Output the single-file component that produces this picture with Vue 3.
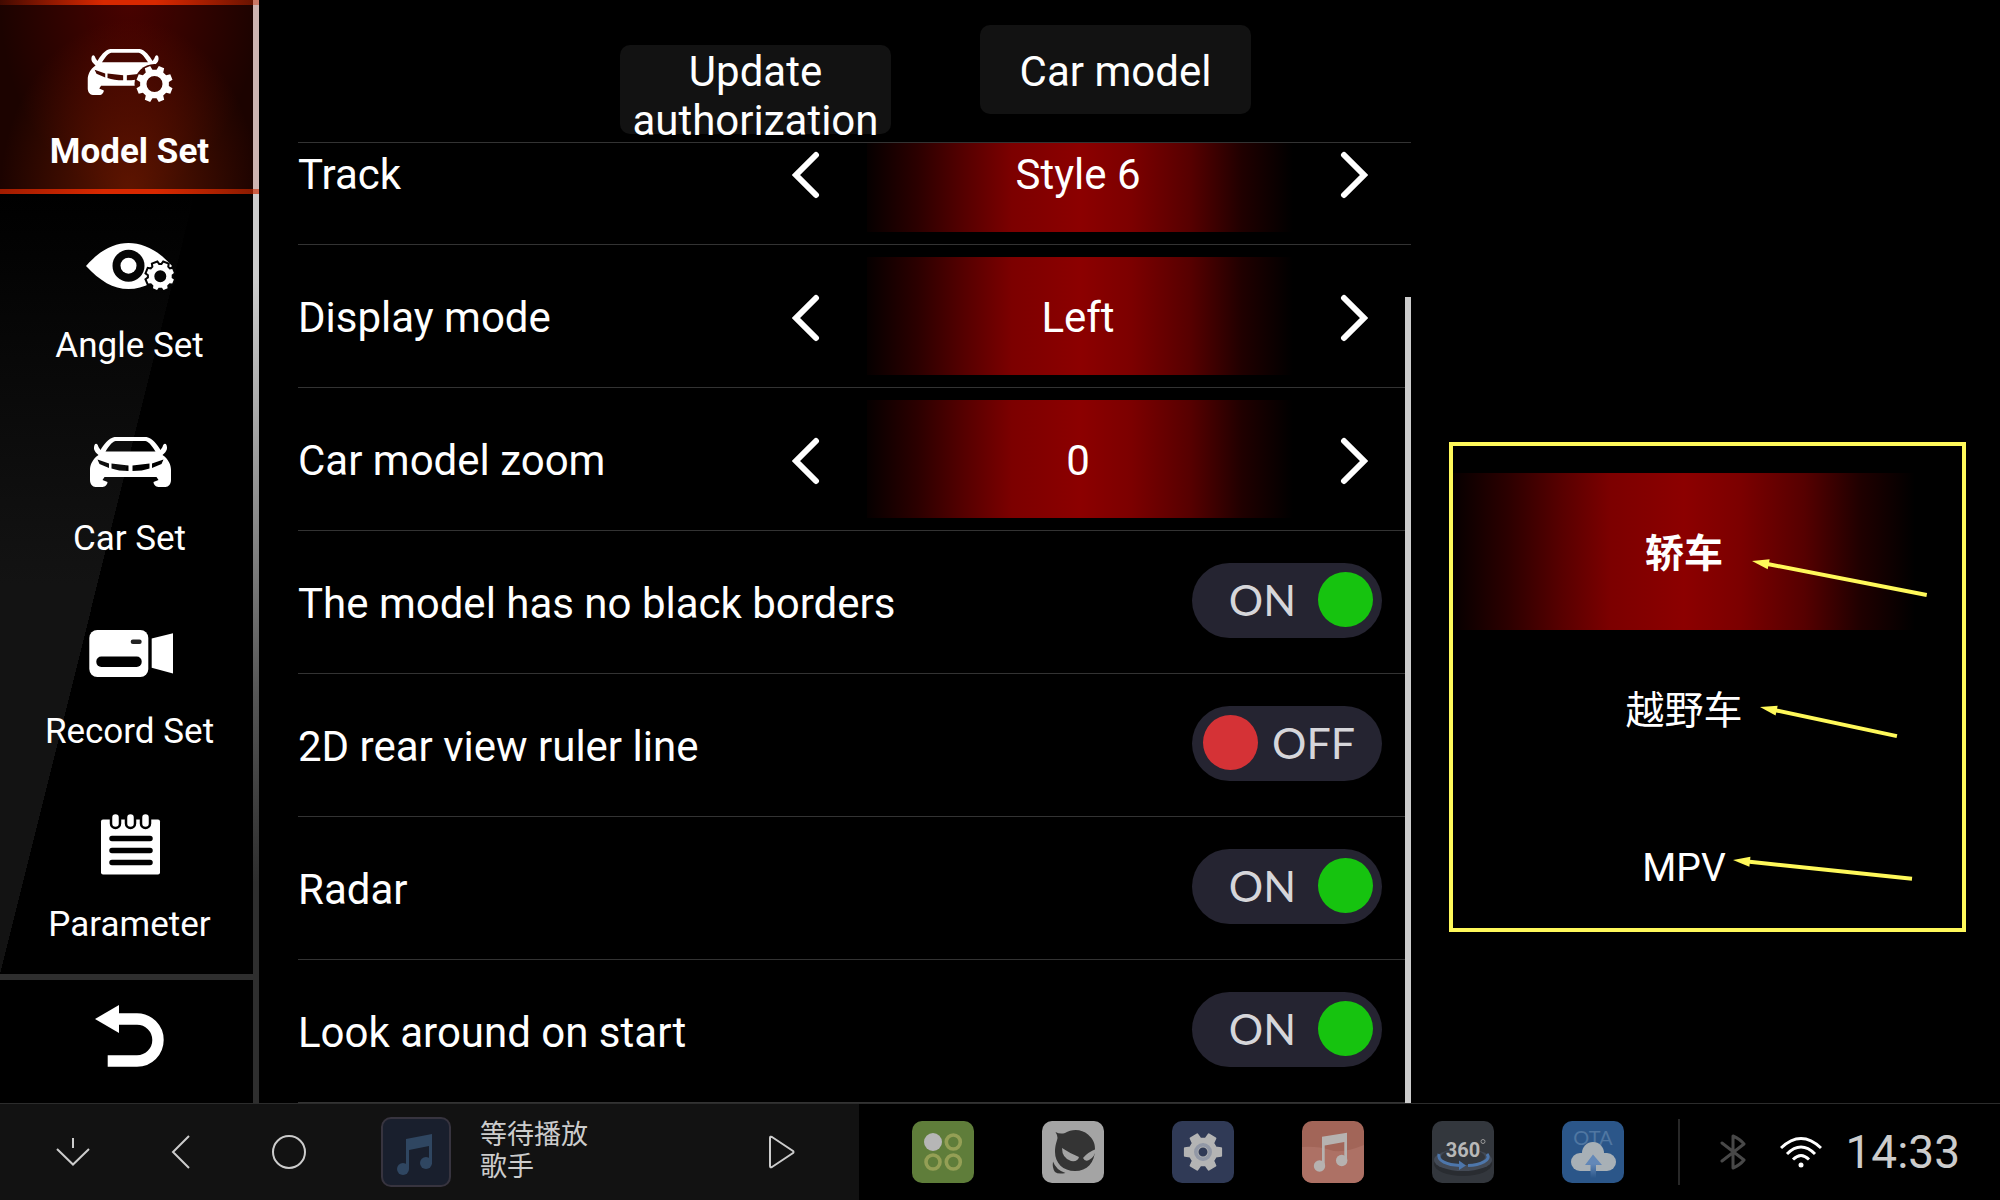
<template>
  <div class="screen">
    <div class="workspace">
      <aside class="sidebar">
        <nav class="nav">
          <button
            v-for="item in menu"
            :key="item.id"
            type="button"
            class="nav-item"
            :class="{ active: item.id === activeMenu }"
            @click="activeMenu = item.id"
          >
            <svg class="nav-icon" viewBox="0 0 96 72" aria-hidden="true">
              <template v-if="item.id === 'model'">
                <mask id="car-cut">
                  <rect width="96" height="72" fill="#fff" />
                  <circle cx="72.5" cy="48" r="20" fill="#000" />
                </mask>
                <g mask="url(#car-cut)">
                  <path :d="carPath" transform="translate(43 13) scale(.92)" fill-rule="evenodd" />
                </g>
                <path :d="gearPath(72.5, 48, 18.5, 14.5, 8, 8, 22.5)" fill-rule="evenodd" />
              </template>
              <template v-else-if="item.id === 'angle'">
                <path d="M4 36C18 20 32 13 46.500 13S76 20 90 36C76 51 62 59 46.500 59S18 51 4 36Z" />
                <circle cx="46.500" cy="35.700" r="16" fill="#050505" />
                <circle cx="46.500" cy="35.700" r="8" />
                <path :d="gearPath(78.3, 46.3, 14, 11.5, 0, 8, 22.5)" fill="#050505" stroke="#050505" stroke-width="4" />
                <path :d="gearPath(78.3, 46.3, 14, 11.5, 6, 8, 22.5)" fill-rule="evenodd" />
              </template>
              <path v-else-if="item.id === 'car'" :d="carPath" transform="translate(48.5 14)" fill-rule="evenodd" />
              <template v-else-if="item.id === 'record'">
                <rect x="7.300" y="14" width="59" height="47" rx="8" />
                <rect x="14.300" y="40.500" width="45.400" height="10.400" rx="5" fill="#000" />
                <rect x="48.700" y="23.500" width="11" height="4.500" rx="2.200" fill="#222" />
                <path d="M69.700 22.500L91 17.300V57.500L69.700 51.700Z" />
              </template>
              <template v-else>
                <rect x="19" y="10.500" width="59" height="55" rx="2" />
                <rect
                  v-for="x in [33.5, 48.5, 63.5]"
                  :key="x"
                  :x="x - 4.5"
                  y="4"
                  width="9"
                  height="15"
                  rx="4.500"
                  stroke="#000"
                  stroke-width="2.500"
                />
                <path d="M30 29.500H68M30 41.500H68M30 53.500H68" stroke="#000" stroke-width="5.500" stroke-linecap="round" />
              </template>
            </svg>
            <span>{{ item.label }}</span>
          </button>
        </nav>
        <button type="button" class="back" aria-label="Back">
          <svg width="72" height="64" viewBox="0 0 72 64">
            <path d="M24 15H43A21 21 0 0 1 43 57H13.700" fill="none" stroke="#fff" stroke-width="11.400" />
            <path d="M1 15L25 1V29Z" fill="#fff" />
          </svg>
        </button>
      </aside>

      <main class="main">
        <header class="header">
          <button type="button" class="head-btn tall">Update authorization</button>
          <button type="button" class="head-btn">Car model</button>
        </header>

        <div class="list">
          <div class="rows">
            <div v-for="row in steppers" :key="row.label" class="row">
              <span class="row-label">{{ row.label }}</span>
              <div class="stepper">
                <button type="button" class="arrow" :aria-label="'Previous ' + row.label">
                  <svg width="28" height="48" viewBox="0 0 28 48"><path d="M24 4L4 24L24 44" /></svg>
                </button>
                <span class="value">{{ row.value }}</span>
                <button type="button" class="arrow" :aria-label="'Next ' + row.label">
                  <svg width="28" height="48" viewBox="0 0 28 48"><path d="M4 4L24 24L4 44" /></svg>
                </button>
              </div>
            </div>
            <div v-for="row in switches" :key="row.id" class="row">
              <label class="row-label" :for="row.id">{{ row.label }}</label>
              <label class="toggle" :class="{ on: row.on }">
                <input :id="row.id" v-model="row.on" type="checkbox" />
                <span>{{ row.on ? 'ON' : 'OFF' }}</span>
              </label>
            </div>
          </div>
          <div class="scrollbar"></div>
        </div>
      </main>

      <section class="side">
        <div class="types">
          <button
            v-for="type in types"
            :key="type"
            type="button"
            class="type"
            :class="{ selected: type === selectedType }"
            @click="selectedType = type"
          >
            {{ type }}
          </button>
          <svg class="pointers" viewBox="0 0 509 482" aria-hidden="true">
            <g v-for="p in pointers" :key="p.y" :transform="`translate(${p.x} ${p.y}) rotate(${p.angle})`">
              <path :d="`M12 0H${p.length}`" stroke="#fff95a" stroke-width="4" />
              <path d="M0 0L17 -5V5Z" fill="#fff95a" />
            </g>
          </svg>
        </div>
      </section>
    </div>

    <footer class="taskbar">
      <div class="player">
        <button type="button" class="key" aria-label="Hide">
          <svg width="34" height="34" viewBox="0 0 34 34"><path d="M1 14L17 29.500L33 14M17 3V13" /></svg>
        </button>
        <button type="button" class="key" aria-label="Back">
          <svg width="34" height="34" viewBox="0 0 34 34"><path d="M26 1L10 17L26 33" /></svg>
        </button>
        <button type="button" class="key" aria-label="Home">
          <svg width="38" height="36" viewBox="0 0 38 36"><circle cx="19" cy="18" r="16" /></svg>
        </button>
        <div class="cover">
          <svg width="66" height="66" viewBox="0 0 66 66">
            <path d="M23 20L49 15V45H46V27L26 31V50H23Z" />
            <ellipse cx="20" cy="50" rx="6" ry="6" />
            <ellipse cx="43" cy="44" rx="6" ry="6" />
          </svg>
        </div>
        <div class="track">
          <span>等待播放</span>
          <span>歌手</span>
        </div>
        <button type="button" class="key play" aria-label="Play">
          <svg width="28" height="34" viewBox="0 0 28 34"><path d="M2 3V31Q2 33 4 32L25 18Q26 17 25 16L4 2Q2 1 2 3Z" /></svg>
        </button>
      </div>

      <div class="apps">
        <button type="button" class="app green" aria-label="Apps">
          <svg viewBox="0 0 62 62">
            <circle cx="21" cy="21" r="9" fill="#b6b6b6" />
            <g fill="none" stroke="#949f55" stroke-width="3.600">
              <circle cx="41.300" cy="21" r="7" />
              <circle cx="21" cy="41" r="7" />
              <circle cx="41.300" cy="41" r="7" />
            </g>
          </svg>
        </button>
        <button type="button" class="app gray" aria-label="Browser">
          <svg viewBox="0 0 62 62" fill="#343434">
            <path d="M13.500 11Q18 13.500 23 12C30 7.500 40 8 46 13.500C51 18 53 22 53 28C53 42 45 50 33 50C21 50 13 42 13 31C13 24 15 20 15.500 17Q15 13 13.500 11Z" />
            <path d="M20 27Q29 33 37 36Q36 41 29 40Q20 37 20 27ZM54 28Q46 31 41 37Q43 41 47 39Q53 36 54 28Z" fill="#a4a4a4" />
            <path d="M11 40.500Q14 49 23.500 52Q16 53.500 13 51Q10 47 11 40.500Z" />
          </svg>
        </button>
        <button type="button" class="app navy" aria-label="Settings">
          <svg viewBox="0 0 62 62">
            <path :d="gearPath(31, 31, 18.5, 13.5, 5.5, 6, 0)" fill="#b4b4b4" fill-rule="evenodd" stroke="#b4b4b4" stroke-width="2" stroke-linejoin="round" />
            <circle cx="31" cy="31" r="7.200" fill="none" stroke="#9298a6" stroke-width="3.600" />
          </svg>
        </button>
        <button type="button" class="app coral" aria-label="Music">
          <svg viewBox="0 0 62 62">
            <path d="M0 26Q16 25 28 29T62 24V62H0Z" fill="#ad7165" />
            <path d="M20 15.700L45 11.700V40H42.300V21L22.700 24.500V45H20Z" fill="#b6b2b0" />
            <circle cx="17.500" cy="45" r="5.700" fill="#b6b2b0" />
            <circle cx="39.700" cy="39.500" r="5.700" fill="#b6b2b0" />
          </svg>
        </button>
        <button type="button" class="app slate" aria-label="Around view">
          <svg viewBox="0 0 62 62">
            <ellipse cx="31" cy="43" rx="29" ry="12" fill="#292c31" />
            <ellipse cx="31" cy="39" rx="29" ry="11" fill="#434a56" />
            <ellipse cx="31" cy="36" rx="22" ry="8" fill="#33373d" />
            <path d="M7 33C5 40 15 44 28 44.500M55 33C60 39 48 44 36 44.500" fill="none" stroke="#4d76ab" stroke-width="3" />
            <path d="M27 39.500L34 44.500L27 49Z" fill="#4d76ab" />
            <text x="31" y="36" text-anchor="middle" class="around">360</text>
            <circle cx="51" cy="20.500" r="2" fill="none" stroke="#999" />
          </svg>
        </button>
        <button type="button" class="app blue" aria-label="OTA update">
          <svg viewBox="0 0 62 62">
            <defs>
              <linearGradient id="stem" x1="0" y1="0" x2="0" y2="1">
                <stop offset=".4" stop-color="#6388b8" />
                <stop offset="1" stop-color="#2b5689" />
              </linearGradient>
            </defs>
            <text x="31" y="24" text-anchor="middle" class="ota">OTA</text>
            <g fill="#a8b0b6">
              <circle cx="31" cy="32" r="11" />
              <rect x="9" y="32" width="45" height="18" rx="9" />
            </g>
            <path d="M31 33.500L40 44H34V57H28.500V44H23Z" fill="url(#stem)" />
          </svg>
        </button>
      </div>

      <div class="status">
        <svg class="bluetooth" width="26" height="36" viewBox="0 0 26 36">
          <path d="M2 9L24 26Q20 31 13 34V2Q20 5 24 10L2 27" />
        </svg>
        <svg class="wifi" width="42" height="32" viewBox="0 0 42 32">
          <path d="M1 12Q21 -7 41 12M7 18Q21 4 35 18M13 23.500Q21 15.500 29 23.500" />
          <circle cx="21" cy="29" r="2.500" />
        </svg>
        <time>14:33</time>
      </div>
    </footer>
  </div>
</template>

<script setup>
import { ref } from 'vue'

const menu = [
  { id: 'model', label: 'Model Set' },
  { id: 'angle', label: 'Angle Set' },
  { id: 'car', label: 'Car Set' },
  { id: 'record', label: 'Record Set' },
  { id: 'parameter', label: 'Parameter' },
]
const activeMenu = ref('model')

const steppers = ref([
  { label: 'Track', value: 'Style 6' },
  { label: 'Display mode', value: 'Left' },
  { label: 'Car model zoom', value: '0' },
])

const switches = ref([
  { id: 'borders', label: 'The model has no black borders', on: true },
  { id: 'ruler', label: '2D rear view ruler line', on: false },
  { id: 'radar', label: 'Radar', on: true },
  { id: 'look', label: 'Look around on start', on: true },
])

const types = ['轿车', '越野车', 'MPV']
const selectedType = ref('轿车')

const pointers = [
  { x: 299, y: 115, angle: 11, length: 178 },
  { x: 307, y: 261, angle: 12, length: 140 },
  { x: 280, y: 414, angle: 6, length: 180 },
]

// front view of a car, centred on x = 0
const carPath = [
  'M-16 0H16C22 1 27 8 30 13L32 10C33 6 35 6 36 8C37 11 37 14 32 18',
  'C38 22 40.500 28 40.500 33V43C40.500 47 38 50 35 50H28C25 50 23 47 23 45L28 43L26 40',
  'H-26L-28 43L-23 45C-23 47 -25 50 -28 50H-35C-38 50 -40.500 47 -40.500 43V33',
  'C-40.500 28 -38 22 -32 18C-37 14 -37 11 -36 8C-35 6 -33 6 -32 10L-30 13C-27 8 -22 1 -16 0Z',
  'M-15 4C-19 5 -22 10 -25 14.500H25C22 10 19 5 15 4Z',
  'M-33 22.500L-21.500 26.500V31L-31 27Z',
  'M33 22.500L21.500 26.500V31L31 27Z',
  'M-19 26.500L-2 28.500V34Q-12 34 -19 31.500Z',
  'M19 26.500L2 28.500V34Q12 34 19 31.500Z',
].join('')

function gearPath(cx, cy, outer, inner, hole, teeth, offset) {
  const step = 360 / teeth
  const point = (r, deg) => {
    const a = (deg * Math.PI) / 180
    return `${(cx + r * Math.cos(a)).toFixed(2)} ${(cy + r * Math.sin(a)).toFixed(2)}`
  }
  const points = []
  for (let i = 0; i < teeth; i++) {
    const a = offset + i * step
    points.push(point(inner, a - step * 0.32), point(outer, a - step * 0.2))
    points.push(point(outer, a + step * 0.2), point(inner, a + step * 0.32))
  }
  let d = 'M' + points.join('L') + 'Z'
  if (hole) {
    d += `M${cx - hole} ${cy}a${hole} ${hole} 0 1 0 ${hole * 2} 0a${hole} ${hole} 0 1 0 ${-hole * 2} 0Z`
  }
  return d
}
</script>

<style>
body {
  margin: 0;
  background: #000;
}
</style>

<style scoped>
.screen {
  display: flex;
  flex-direction: column;
  height: 100vh;
  overflow: hidden;
  background: #000;
  color: #fff;
  font-family: Roboto, 'Noto Sans CJK SC', sans-serif;
}

button {
  padding: 0;
  border: 0;
  background: none;
  color: inherit;
  font: inherit;
}

svg {
  display: block;
}

.workspace {
  flex: 1;
  min-height: 0;
  display: grid;
  grid-template-columns: 259px minmax(0, 1152fr) minmax(0, 589fr);
  grid-template-rows: minmax(0, 1fr);
}

/* sidebar */
.sidebar {
  display: flex;
  flex-direction: column;
  background: linear-gradient(#ccc, #ccc 25%, #aaa 37%, #555 63%, #2e2e2e 80%) right / 6px 100% no-repeat;
}

.nav {
  flex: 1;
  background:
    linear-gradient(104deg, transparent 49%, #000 49%) left / 253px 100% no-repeat,
    linear-gradient(#000 20%, #131313 60%) left / 253px 100% no-repeat;
}

.nav-item {
  display: flex;
  flex-direction: column;
  align-items: center;
  width: 100%;
  height: 193px;
  padding-top: 36px;
  box-sizing: border-box;
  font-size: 35px;
  line-height: 40px;
}

.nav-item.active {
  height: 194px;
  font-weight: 700;
  background:
    linear-gradient(90deg, rgba(120, 20, 0, 0.4), #d82800 40%, #d82800 60%, rgba(200, 40, 0, 0.4)) top / 100% 5px no-repeat,
    linear-gradient(90deg, #a01c00, #d82800 40%, #d82800 60%, rgba(200, 40, 0, 0.6)) bottom / 100% 5px no-repeat,
    radial-gradient(ellipse 50% 90% at 50% 100%, rgba(200, 50, 0, 0.38), transparent),
    radial-gradient(ellipse 50% 100% at 50% 0%, rgba(200, 0, 0, 0.26), transparent),
    rgba(220, 20, 0, 0.13);
}

.nav-icon {
  width: 96px;
  height: 72px;
  margin-bottom: 24px;
  fill: #fff;
}

.back {
  display: flex;
  align-items: center;
  justify-content: center;
  height: 129px;
  padding-bottom: 12px;
  box-sizing: border-box;
  border-top: 6px solid #2e2e2e;
}

/* settings */
.main {
  display: flex;
  flex-direction: column;
  padding-left: 39px;
  font-size: 42px;
  line-height: 49px;
}

.header {
  display: flex;
  align-items: baseline;
  gap: 89px;
  height: 142px;
  padding: 25px 0 0 322px;
  box-sizing: border-box;
}

.head-btn {
  display: flex;
  align-items: center;
  justify-content: center;
  width: 271px;
  height: 89px;
  padding-top: 4px;
  box-sizing: border-box;
  border-radius: 10px;
  background: #121212;
}

.head-btn.tall {
  align-items: flex-start;
  padding-top: 2px;
}

.list {
  flex: 1;
  min-height: 0;
  position: relative;
  display: flex;
  flex-direction: column;
  justify-content: flex-end;
  overflow: hidden;
  border-top: 1px solid #333;
}

.row {
  display: flex;
  align-items: center;
  height: 143px;
  padding-right: 29px;
  box-sizing: border-box;
  border-bottom: 1px solid #333;
}

.row-label {
  flex: 1;
  padding-top: 2px;
}

.stepper {
  display: flex;
  align-items: center;
  gap: 47px;
  margin-right: 14px;
}

.arrow {
  padding-top: 4px;
}

.arrow path {
  fill: none;
  stroke: #fff;
  stroke-width: 6;
  stroke-linecap: round;
}

.value {
  width: 426px;
  height: 118px;
  padding: 4px 4px 0 0;
  box-sizing: border-box;
  line-height: 114px;
  text-align: center;
  background: linear-gradient(90deg, #060000, #2c0000 12%, #560000 23%, #7c0000 34%, #8c0000 50%, #7c0000 62%, #560000 76%, #200000 88%, #000);
}

.toggle {
  display: flex;
  align-items: center;
  gap: 14px;
  width: 190px;
  height: 75px;
  margin-bottom: 3px;
  padding: 0 9px 2px 11px;
  box-sizing: border-box;
  border-radius: 38px;
  background: #252431;
  color: #d6d6da;
  font-family: Lato, sans-serif;
  font-size: 43px;
}

.toggle.on {
  flex-direction: row-reverse;
  gap: 22px;
}

.toggle input {
  appearance: none;
  width: 55px;
  height: 55px;
  margin: 0;
  border-radius: 50%;
  background: #d53236;
}

.toggle.on input {
  background: #16c30f;
}

.scrollbar {
  position: absolute;
  top: 154px;
  right: 0;
  bottom: 0;
  width: 6px;
  background: #ccc;
}

/* vehicle types */
.side {
  padding: 442px 34px 0 38px;
}

.types {
  position: relative;
  padding: 27px 47px 0 0;
  height: 490px;
  box-sizing: border-box;
  border: 4px solid #fff95a;
}

.type {
  display: block;
  width: 100%;
  height: 157px;
  padding-top: 4px;
  font-size: 39px;
  line-height: 46px;
}

.type.selected {
  font-weight: 700;
  background: linear-gradient(90deg, #060000, #2c0000 12%, #560000 23%, #7c0000 34%, #8c0000 50%, #7c0000 62%, #560000 76%, #200000 88%, #000);
}

.pointers {
  position: absolute;
  inset: 0;
  width: 100%;
  height: 100%;
  pointer-events: none;
}

/* taskbar */
.taskbar {
  display: flex;
  align-items: center;
  height: 97px;
  box-sizing: border-box;
  border-top: 1px solid #2c2c2c;
}

.player {
  display: flex;
  align-items: center;
  width: 859px;
  height: 100%;
  padding-left: 56px;
  box-sizing: border-box;
  background: #121212;
}

.key {
  margin-right: 73px;
}

.key svg {
  fill: none;
  stroke: #ccc;
  stroke-width: 2;
}

.cover {
  width: 66px;
  height: 66px;
  border: 2px solid #37343f;
  border-radius: 10px;
  background: #191f2d;
  fill: #2f4661;
}

.track {
  display: flex;
  flex-direction: column;
  flex: 1;
  margin-left: 29px;
  margin-bottom: 2px;
  color: #ccc;
  font-size: 27px;
  line-height: 32px;
}

.play {
  margin-right: 63px;
}

.apps {
  display: flex;
  flex: 1;
  gap: 68px;
  padding-left: 53px;
}

.app {
  width: 62px;
  height: 62px;
  border-radius: 10px;
  overflow: hidden;
}

.green {
  background: #5f7d3a;
}

.gray {
  background: #a4a4a4;
}

.navy {
  background: #303a56;
}

.coral {
  background: #a26558;
}

.slate {
  background: #33373d;
}

.blue {
  background: #2b5689;
}

.around {
  fill: #b8b8b8;
  font-size: 20px;
  font-weight: 700;
}

.ota {
  fill: #5077a2;
  font-family: Lato, sans-serif;
  font-size: 20px;
}

.status {
  display: flex;
  align-items: center;
  height: 66px;
  padding: 0 40px;
  border-left: 2px solid #282828;
}

.bluetooth {
  margin-right: 34px;
  fill: none;
  stroke: #484848;
  stroke-width: 3;
  stroke-linejoin: round;
  stroke-linecap: round;
}

.wifi {
  margin-right: 23px;
  fill: #fff;
}

.wifi path {
  fill: none;
  stroke: #fff;
  stroke-width: 3;
}

time {
  color: #ccc;
  font-size: 46px;
  line-height: 54px;
}
</style>
